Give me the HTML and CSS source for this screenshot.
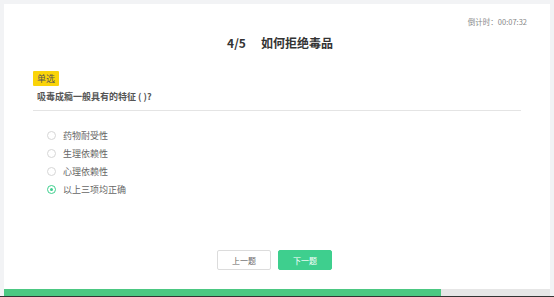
FILE: index.html
```html
<!DOCTYPE html>
<html lang="zh">
<head>
<meta charset="utf-8">
<link rel="stylesheet" href="styles.css">
</head>
<body>
<div class="page">
  <div class="card">
    <div class="content">
      <div class="timer">倒计时：00:07:32</div>
      <h1 class="title"><span class="num">4/5</span>如何拒绝毒品</h1>
      <div class="question">
        <span class="tag">单选</span>
        <div class="qtext">吸毒成瘾一般具有的特征 ( )?</div>
      </div>
      <ul class="options">
        <li class="opt"><span class="radio"></span>药物耐受性</li>
        <li class="opt"><span class="radio"></span>生理依赖性</li>
        <li class="opt"><span class="radio"></span>心理依赖性</li>
        <li class="opt checked"><span class="radio"></span>以上三项均正确</li>
      </ul>
      <div class="actions">
        <button class="btn prev">上一题</button>
        <button class="btn next">下一题</button>
      </div>
    </div>
    <div class="progress"><div class="bar" style="width:80%"></div></div>
  </div>
</div>
<div class="edge"></div>
</body>
</html>
```
FILE: styles.css
```css
html, body { margin: 0; padding: 0; }
body {
  background: #f2f3f5;
  font-family: "Noto Sans CJK SC", "Noto Sans", sans-serif;
  width: 554px;
  height: 297px;
  overflow: hidden;
}
.page {
  padding: 4px 4px 0 4px;
  height: 296px;
  box-sizing: border-box;
}
.card {
  background: #fff;
  height: 292px;
  display: flex;
  flex-direction: column;
}
.content {
  flex: 1;
  display: flex;
  flex-direction: column;
  padding: 0 29px 0 29px;
}
.timer {
  align-self: flex-end;
  font-size: 7.5px;
  color: #888;
  margin-top: 12px;
  margin-right: -6px;
  line-height: 12px;
}
.title {
  margin: 7px 0 0 0;
  text-align: center;
  font-size: 12px;
  font-weight: bold;
  color: #333;
  line-height: 16px;
  padding-left: 6px;
}
.title .num { margin-right: 15px; }
.question {
  margin-top: 12px;
  border-bottom: 1px solid #e4e4e4;
  padding-bottom: 6px;
}
.tag {
  display: inline-block;
  background: #fad40a;
  color: #555;
  font-size: 9px;
  line-height: 15px;
  padding: 0 4px;
  border-radius: 1px;
}
.qtext {
  margin-top: 2px;
  font-size: 9px;
  color: #555;
  font-weight: bold;
  line-height: 15px;
  padding-left: 4px;
}
.options {
  list-style: none;
  margin: 15px 0 0 0;
  padding: 0 0 0 14px;
}
.opt {
  display: flex;
  align-items: center;
  height: 18px;
  font-size: 9px;
  color: #666;
}
.radio {
  width: 7px;
  height: 7px;
  border: 1px solid #d6d6d6;
  border-radius: 50%;
  margin-right: 7px;
  box-sizing: content-box;
  position: relative;
}
.checked .radio { border-color: #3ecf8e; }
.checked .radio::after {
  content: "";
  position: absolute;
  left: 2px; top: 2px;
  width: 3px; height: 3px;
  border-radius: 50%;
  background: #3ecf8e;
}
.actions {
  margin-top: auto;
  margin-bottom: 19px;
  display: flex;
  justify-content: center;
  gap: 7px;
  padding-right: 5px;
}
.btn {
  width: 54px;
  height: 20px;
  font-family: inherit;
  font-size: 8px;
  border-radius: 2px;
  padding: 0;
  cursor: pointer;
}
.prev { background: #fff; border: 1px solid #dcdcdc; color: #666; }
.next { background: #3ecf8e; border: 1px solid #3ecf8e; color: #fff; }
.progress {
  height: 7px;
  background: #e6e6e6;
}
.bar { height: 100%; background: #4cc882; }
.edge { height: 1px; background: #333; }
```
